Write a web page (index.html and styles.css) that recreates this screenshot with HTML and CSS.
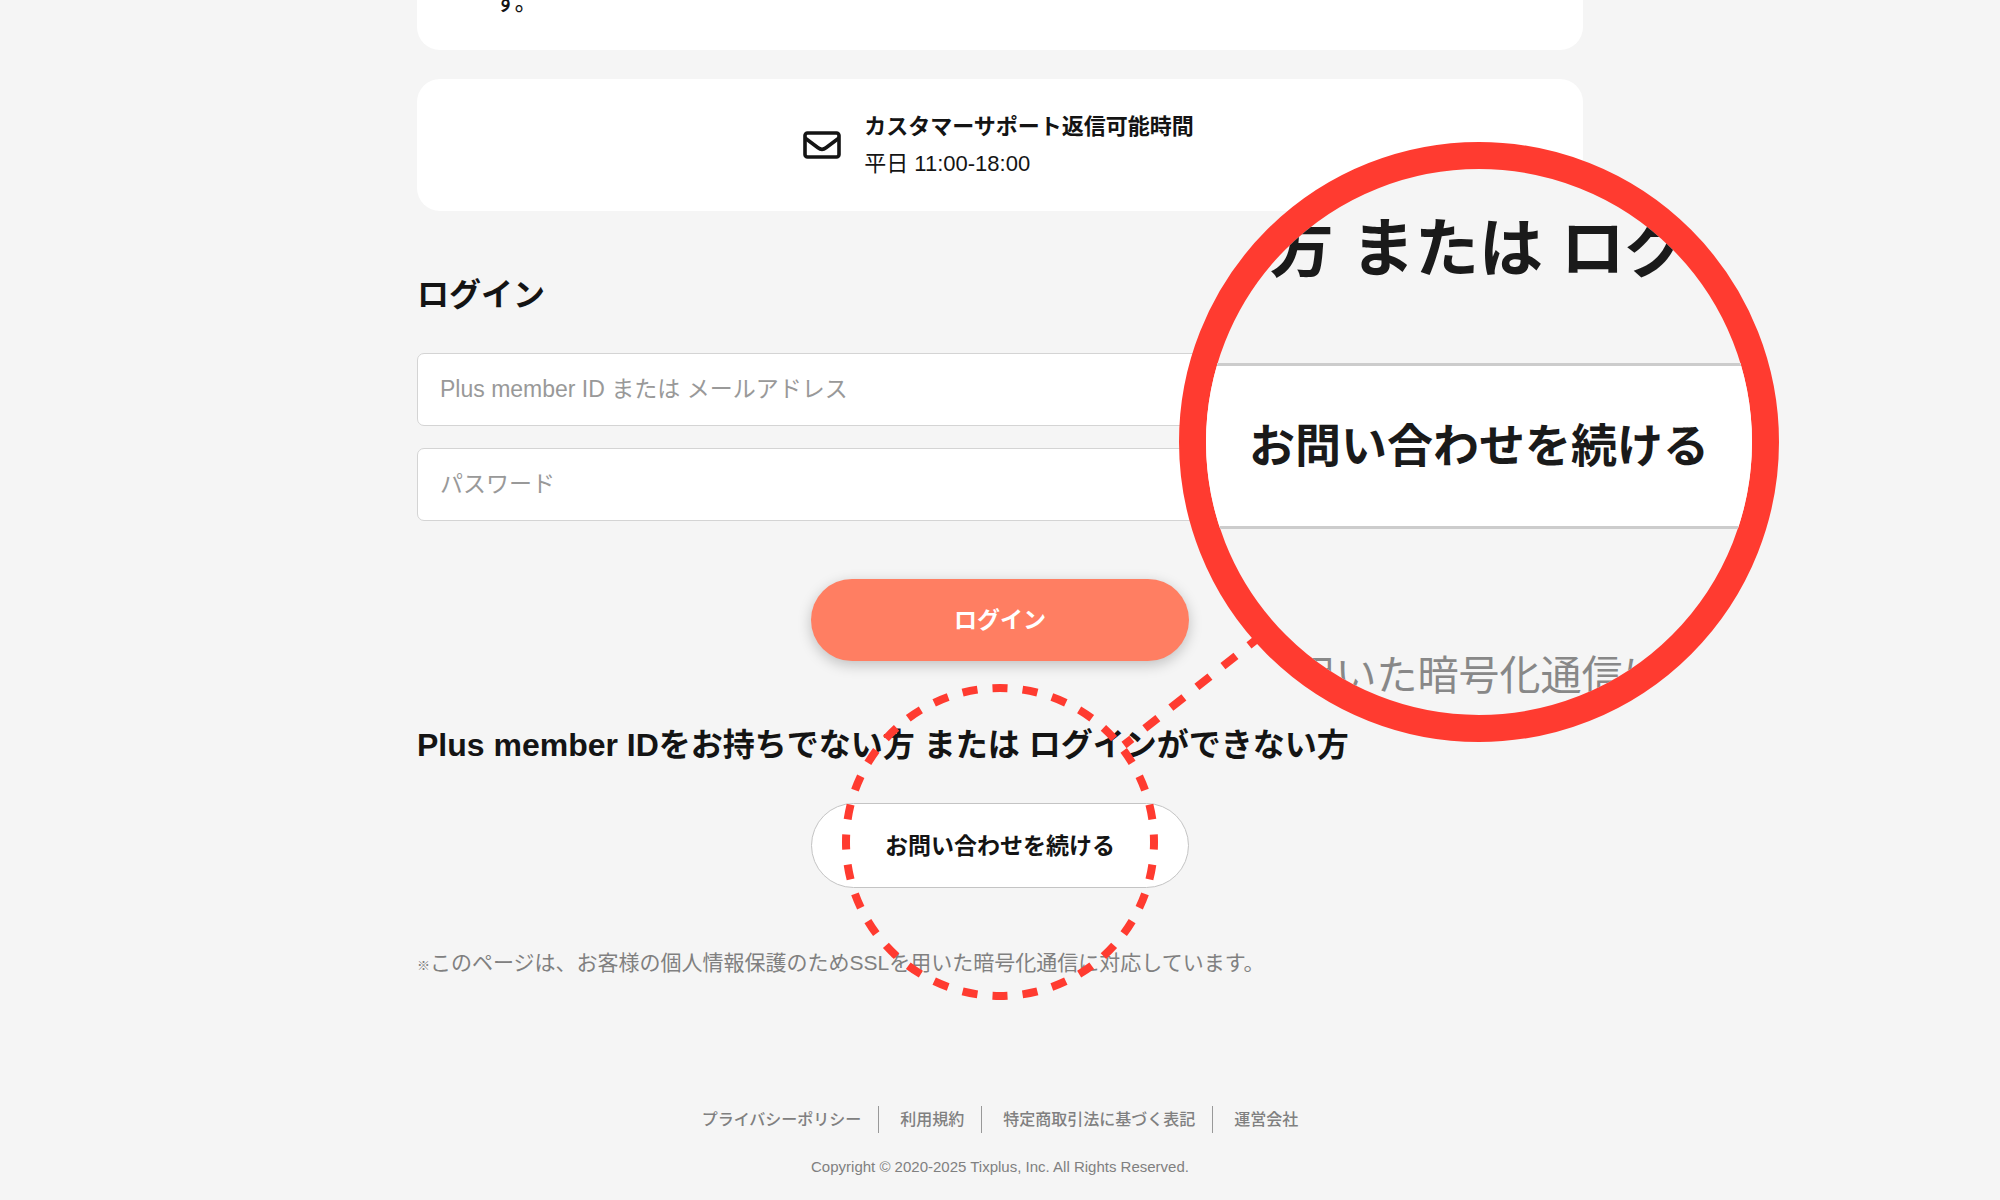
FILE: index.html
```html
<!DOCTYPE html>
<html lang="ja">
<head>
    <meta charset="UTF-8">
    <title>お問い合わせ</title>
    <link rel="stylesheet" href="styles.css">
</head>
<body>
    <main class="container">
        <section class="card notice">
            <p>す。</p>
        </section>

        <section class="card support">
            <svg class="mail-icon" viewBox="0 0 38 28" fill="none" stroke="#141414" stroke-width="3.6" stroke-linejoin="round" aria-hidden="true">
                <rect x="2" y="2" width="34" height="24" rx="2.5"/>
                <path d="M2 7 L15 16.8 Q19 19.8 23 16.8 L36 7"/>
            </svg>
            <div>
                <h3>カスタマーサポート返信可能時間</h3>
                <p>平日 11:00-18:00</p>
            </div>
        </section>

        <h2>ログイン</h2>
        <form class="login-form">
            <input type="text" aria-label="Plus member ID または メールアドレス" placeholder="Plus member ID または メールアドレス">
            <input type="password" aria-label="パスワード" placeholder="パスワード">
            <button type="submit" class="btn btn-login">ログイン</button>
        </form>

        <h2>Plus member IDをお持ちでない方 または ログインができない方</h2>
        <button type="button" class="btn btn-contact">お問い合わせを続ける</button>

        <p class="ssl-note"><span class="mark">※</span>このページは、お客様の個人情報保護のためSSLを用いた暗号化通信に対応しています。</p>
    </main>

    <footer>
        <ul class="footer-links">
            <li><a href="#">プライバシーポリシー</a></li>
            <li><a href="#">利用規約</a></li>
            <li><a href="#">特定商取引法に基づく表記</a></li>
            <li><a href="#">運営会社</a></li>
        </ul>
        <p class="copyright">Copyright © 2020-2025 Tixplus, Inc. All Rights Reserved.</p>
    </footer>

    <!-- dashed ring and the line to the magnifier -->
    <svg class="pointer" viewBox="0 0 440 380" fill="none" stroke="#ff3b30" stroke-width="8" aria-hidden="true">
        <circle cx="160" cy="212" r="154" pathLength="128" stroke-dasharray="2 2" stroke-dashoffset="1"/>
        <line x1="422" y1="5" x2="284" y2="115" pathLength="106" stroke-dasharray="10 10"/>
    </svg>

    <div class="magnifier" aria-hidden="true">
        <div class="zoom-heading">い方 または ログイ</div>
        <div class="zoom-button">お問い合わせを続ける</div>
        <div class="zoom-note">を用いた暗号化通信に対</div>
    </div>
</body>
</html>
```
FILE: styles.css
```css
* {
    box-sizing: border-box;
}
body {
    margin: 0;
    position: relative;
    background-color: #f5f5f5;
    color: #141414;
    font-family: "Liberation Sans", "Noto Sans CJK JP", sans-serif;
    font-size: 22px;
}
h2, h3, p, ul {
    margin: 0;
    padding: 0;
}
.container {
    display: flow-root;
    max-width: 1166px;
    margin: 0 auto;
}
.card {
    background-color: #fff;
    border-radius: 23px;
}
.notice {
    margin-top: -40px;
    padding: 24px 78px 28px;
    font-weight: 500;
    line-height: 38px;
}
.support {
    display: flex;
    justify-content: center;
    align-items: center;
    gap: 23px;
    margin-top: 29px;
    padding: 29px 32px 29px 29px;
    line-height: 37px;
}
.support h3 {
    font-size: 22px;
}
.mail-icon {
    width: 38px;
    height: 28px;
}
h2 {
    margin: 60px 0 34px;
    font-size: 32px;
    line-height: 48px;
}
.login-form {
    display: flex;
    flex-direction: column;
    gap: 22px;
}
.login-form input {
    height: 73px;
    padding: 0 22px;
    border: 1px solid #d4d4d4;
    border-radius: 7px;
    background-color: #fff;
    font-family: inherit;
    font-size: 23px;
}
.login-form input::placeholder {
    color: #999;
}
.btn {
    display: block;
    width: 378px;
    margin: 0 auto;
    padding: 0 0 4px;
    border-radius: 43px;
    font-family: inherit;
    font-size: 23px;
    font-weight: bold;
}
.btn-login {
    height: 82px;
    margin-top: 36px;
    border: none;
    background-color: #ff7e62;
    color: #fff;
    box-shadow: 0 4px 14px rgba(0, 0, 0, 0.22);
}
.btn-contact {
    height: 85px;
    border: 1px solid #c4c4c4;
    background-color: #fff;
    color: #141414;
}
.ssl-note {
    margin-top: 60px;
    color: #808080;
    font-size: 21px;
    line-height: 30px;
}
.ssl-note .mark {
    font-size: 13px;
    font-weight: bold;
    line-height: 1;
}
footer {
    margin-top: 128px;
    color: #808080;
    text-align: center;
}
.footer-links {
    display: flex;
    justify-content: center;
    list-style: none;
    font-size: 16px;
    font-weight: 500;
    line-height: 27px;
}
.footer-links li {
    padding: 0 17px 0 21px;
    border-right: 1px solid #999;
}
.footer-links li:last-child {
    padding-right: 21px;
    border-right: none;
}
.footer-links a {
    color: inherit;
    text-decoration: none;
}
.copyright {
    margin-top: 23px;
    font-size: 15px;
    line-height: 22px;
}
.pointer {
    position: absolute;
    top: 630px;
    left: calc(50% - 160px);
    width: 440px;
    height: 380px;
}
.magnifier {
    position: absolute;
    top: 142px;
    left: calc(50% + 179px);
    display: flex;
    flex-direction: column;
    align-items: center;
    width: 600px;
    height: 600px;
    padding-top: 34px;
    border: 27px solid #ff3b30;
    border-radius: 50%;
    background-color: #f5f5f5;
    color: #1a1a1a;
    overflow: hidden;
    white-space: nowrap;
}
.zoom-heading {
    font-size: 64px;
    font-weight: bold;
    line-height: 92px;
}
.zoom-button {
    width: 100%;
    margin-top: 68px;
    border-top: 3px solid #ccc;
    border-bottom: 3px solid #ccc;
    background-color: #fff;
    font-size: 46px;
    font-weight: bold;
    line-height: 160px;
    text-align: center;
}
.zoom-note {
    margin-top: 117px;
    color: #888;
    font-size: 41px;
    line-height: 60px;
}
```
